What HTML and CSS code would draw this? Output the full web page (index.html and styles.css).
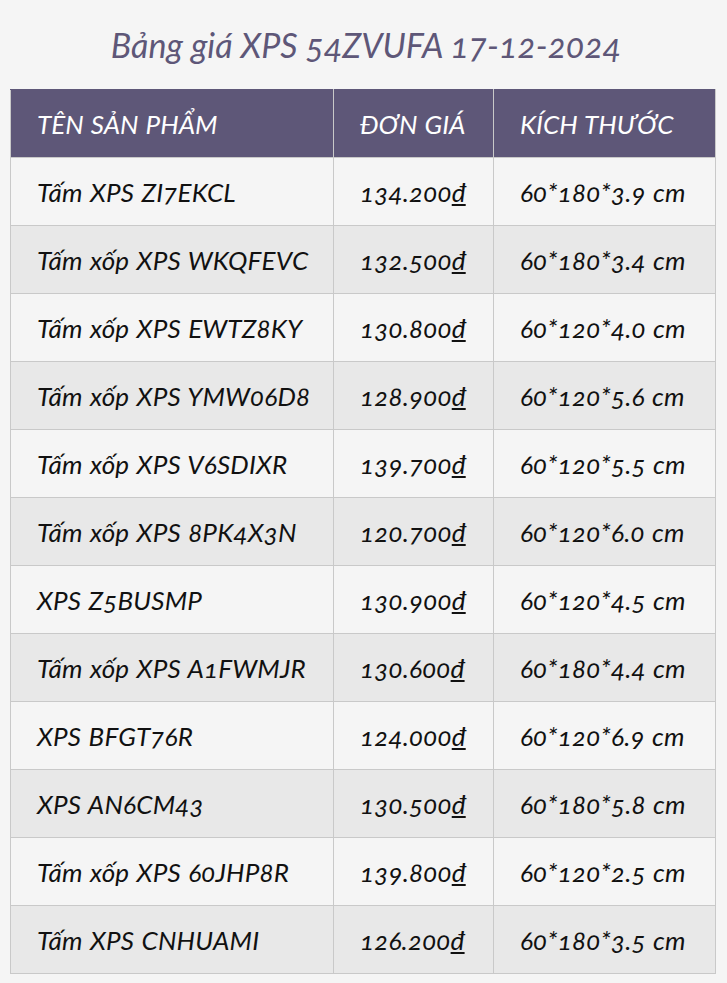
FILE: index.html
```html
<!DOCTYPE html>
<html lang="vi">
<head>
<meta charset="utf-8">
<link rel="stylesheet" href="styles.css">
</head>
<body>
<h1 class="title">Bảng giá XPS 54ZVUFA 17-12-2024</h1>
<table class="price-table">
  <thead>
    <tr><th class="c-name">TÊN SẢN PHẨM</th><th class="c-price">ĐƠN GIÁ</th><th class="c-size">KÍCH THƯỚC</th></tr>
  </thead>
  <tbody>
    <tr><td>Tấm XPS ZI7EKCL</td><td>134.200<u>đ</u></td><td>60*180*3.9 cm</td></tr>
    <tr><td>Tấm xốp XPS WKQFEVC</td><td>132.500<u>đ</u></td><td>60*180*3.4 cm</td></tr>
    <tr><td>Tấm xốp XPS EWTZ8KY</td><td>130.800<u>đ</u></td><td>60*120*4.0 cm</td></tr>
    <tr><td>Tấm xốp XPS YMW06D8</td><td>128.900<u>đ</u></td><td>60*120*5.6 cm</td></tr>
    <tr><td>Tấm xốp XPS V6SDIXR</td><td>139.700<u>đ</u></td><td>60*120*5.5 cm</td></tr>
    <tr><td>Tấm xốp XPS 8PK4X3N</td><td>120.700<u>đ</u></td><td>60*120*6.0 cm</td></tr>
    <tr><td>XPS Z5BUSMP</td><td>130.900<u>đ</u></td><td>60*120*4.5 cm</td></tr>
    <tr><td>Tấm xốp XPS A1FWMJR</td><td>130.600<u>đ</u></td><td>60*180*4.4 cm</td></tr>
    <tr><td>XPS BFGT76R</td><td>124.000<u>đ</u></td><td>60*120*6.9 cm</td></tr>
    <tr><td>XPS AN6CM43</td><td>130.500<u>đ</u></td><td>60*180*5.8 cm</td></tr>
    <tr><td>Tấm xốp XPS 60JHP8R</td><td>139.800<u>đ</u></td><td>60*120*2.5 cm</td></tr>
    <tr><td>Tấm XPS CNHUAMI</td><td>126.200<u>đ</u></td><td>60*180*3.5 cm</td></tr>
  </tbody>
</table>
</body>
</html>
```
FILE: styles.css
```css
html, body {
  margin: 0;
  padding: 0;
  background: #f5f5f5;
}
body {
  padding: 0 11px 0 10px;
  font-family: "Lato", "Open Sans", sans-serif;
  font-style: italic;
  font-variant-numeric: oldstyle-nums;
}
.title {
  margin: 0;
  height: 89px;
  padding: 25px 0 0 6px;
  box-sizing: border-box;
  text-align: center;
  font-size: 34px;
  font-weight: 400;
  line-height: 40px;
  color: #5e5778;
}
.price-table {
  width: 100%;
  border-collapse: collapse;
  font-size: 26px;
  letter-spacing: 0.2px;
  word-spacing: 1px;
}
.price-table th,
.price-table td {
  border: 1px solid #c9c9c9;
  height: 67px;
  padding: 0 0 0 26px;
  text-align: left;
  vertical-align: middle;
  font-weight: 400;
  color: #111;
}
.price-table th {
  background: #5e5778;
  color: #fff;
  border-color: #c9c9c9;
  border-top-color: #5e5778;
  letter-spacing: 0;
}
.c-name { width: 296px; }
.c-price { width: 133px; }
.price-table tbody tr:nth-child(odd) td { background: #f5f5f5; }
.price-table tbody tr:nth-child(even) td { background: #e8e8e8; }
.price-table u {
  text-decoration: underline;
  text-underline-offset: 2px;
}
```
